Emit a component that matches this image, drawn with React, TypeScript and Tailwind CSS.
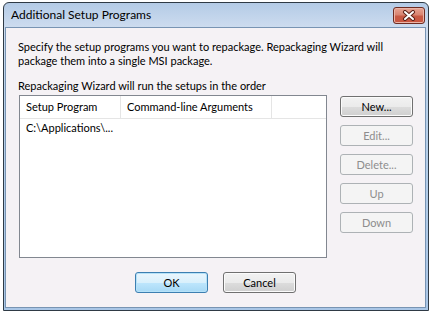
const btnBase =
    'flex items-center justify-center w-[73px] h-[21px] rounded-[3px] border text-[11px] leading-none'

function Button({ label, variant = 'normal' }: { label: string; variant?: 'normal' | 'default' | 'disabled' }) {
    if (variant === 'disabled') {
        return (
            <div className={`${btnBase} border-[#adb2b5] bg-[#f4f4f4] text-[#8d8d8d]`}>
                {label}
            </div>
        )
    }
    if (variant === 'default') {
        return (
            <div
                className={`${btnBase} border-[#3c7fb1] text-black shadow-[inset_0_0_0_1px_#b6e2f8] bg-[linear-gradient(#eaf6fd_0%,#d9f0fc_50%,#bee6fd_50%,#a7d9f5_100%)]`}
            >
                {label}
            </div>
        )
    }
    return (
        <div
            className={`${btnBase} border-[#707070] text-black shadow-[inset_0_0_0_1px_#fbfbfb] bg-[linear-gradient(#f2f2f2_0%,#ebebeb_50%,#dddddd_50%,#cfcfcf_100%)]`}
        >
            {label}
        </div>
    )
}

function CloseButton() {
    return (
        <div className="flex items-center justify-center w-[32px] h-[17px] rounded-[3px] border border-[#6e2c22] bg-[linear-gradient(#e8a493_0%,#d98471_45%,#c85a45_55%,#c9553f_100%)] shadow-[inset_0_0_0_1px_#eab5a8]">
            <svg width="14" height="11" viewBox="0 0 14 11">
                <path d="M3 2 L11 9 M11 2 L3 9" stroke="#5a2118" strokeWidth="4" strokeLinecap="round" />
                <path d="M3 2 L11 9 M11 2 L3 9" stroke="#ffffff" strokeWidth="2" strokeLinecap="round" />
            </svg>
        </div>
    )
}

export default function App() {
    return (
        <div className="w-[431px] h-[314px] bg-white pt-[2px] pl-[3px] font-['Lato',sans-serif] text-[11px] text-black">
            <div className="w-[426px] h-[309px] flex flex-col rounded-t-[6px] border border-[#2f3a45] bg-[linear-gradient(#b4cbe6_0%,#cddcef_8%,#b9d1ea_30%,#a9c6e6_100%)]">
                <div className="flex items-center justify-between h-[24px] pl-[7px] pr-[3px]">
                    <span className="text-[12px] text-black">Additional Setup Programs</span>
                    <CloseButton />
                </div>
                <div className="flex-1 ml-[1px] mr-[2px] mb-[2px] flex flex-col bg-[#f5f2f5] border border-[#7894b3] px-[12px] pt-[12px]">
                    <p className="leading-[14px]">
                        Specify the setup programs you want to repackage. Repackaging Wizard will
                        <br />
                        package them into a single MSI package.
                    </p>
                    <p className="mt-[11px] leading-[14px]">Repackaging Wizard will run the setups in the order</p>
                    <div className="flex mt-[2px] ml-px gap-[13px]">
                        <div className="w-[308px] h-[163px] border border-[#828790] bg-white flex flex-col">
                            <div className="flex h-[23px] border-b border-[#e5e5e5]">
                                <div className="w-[101px] flex items-center pl-[6px] border-r border-[#e5e5e5]">
                                    Setup Program
                                </div>
                                <div className="w-[151px] flex items-center pl-[6px] border-r border-[#e5e5e5]">
                                    Command-line Arguments
                                </div>
                                <div className="flex-1" />
                            </div>
                            <div className="flex items-center h-[18px] pl-[6px]">C:\Applications\...</div>
                        </div>
                        <div className="flex flex-col gap-[8px] pt-px">
                            <Button label="New..." />
                            <Button label="Edit..." variant="disabled" />
                            <Button label="Delete..." variant="disabled" />
                            <Button label="Up" variant="disabled" />
                            <Button label="Down" variant="disabled" />
                        </div>
                    </div>
                    <div className="flex justify-center gap-[15px] mt-[14px]">
                        <Button label="OK" variant="default" />
                        <Button label="Cancel" />
                    </div>
                </div>
            </div>
        </div>
    )
}
